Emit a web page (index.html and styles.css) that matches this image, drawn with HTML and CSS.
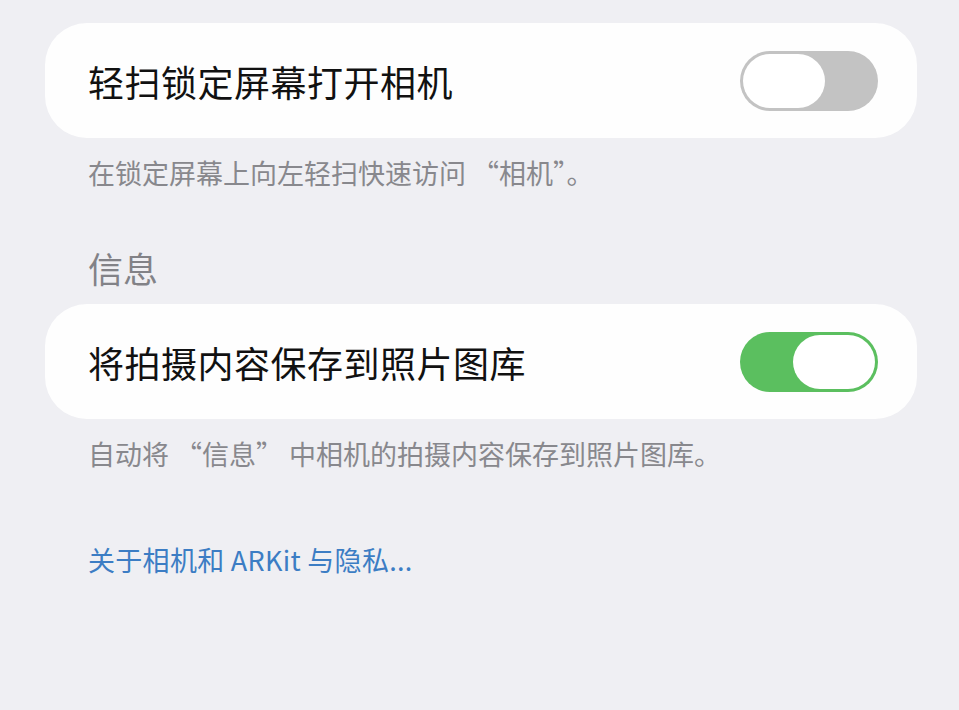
FILE: index.html
```html
<!DOCTYPE html>
<html lang="zh-CN">
<head>
    <meta charset="UTF-8">
    <meta name="viewport" content="width=device-width, initial-scale=1.0">
    <title>相机</title>
    <link rel="stylesheet" href="styles.css">
</head>
<body>
    <div class="settings">
        <div class="cell">
            <span class="cell-label">轻扫锁定屏幕打开相机</span>
            <div class="switch"><div class="knob"></div></div>
        </div>
        <p class="note">在锁定屏幕上向左轻扫快速访问 “相机”。</p>

        <h2 class="group-title">信息</h2>
        <div class="cell">
            <span class="cell-label">将拍摄内容保存到照片图库</span>
            <div class="switch on"><div class="knob"></div></div>
        </div>
        <p class="note">自动将 “信息” 中相机的拍摄内容保存到照片图库。</p>

        <a class="privacy-link" href="#">关于相机和 ARKit 与隐私...</a>
    </div>
</body>
</html>
```

FILE: styles.css
```css
body {
    margin: 0;
    background-color: #efeff3;
    font-family: "Noto Sans CJK SC", "Noto Sans", sans-serif;
    overflow: hidden;
}
.settings {
    padding: 23px 42px 0 45px;
}
.cell {
    display: flex;
    align-items: center;
    justify-content: space-between;
    height: 115px;
    padding: 0 39px 0 43px;
    background-color: #fefefe;
    border-radius: 42px;
}
.cell-label {
    font-size: 36px;
    line-height: 44px;
    letter-spacing: 0.5px;
    color: #111;
}
.switch {
    display: flex;
    width: 138px;
    height: 60px;
    padding: 3px;
    box-sizing: border-box;
    border-radius: 30px;
    background-color: #c3c3c3;
}
.switch .knob {
    width: 82px;
    height: 54px;
    border-radius: 27px;
    background-color: #fff;
}
.switch.on {
    justify-content: flex-end;
    background-color: #5bbf5f;
}
.note {
    margin: 16px 0 0;
    padding-left: 43px;
    font-size: 27px;
    line-height: 38px;
    color: #88888d;
}
.group-title {
    margin: 54px 0 14px;
    padding-left: 43px;
    font-size: 35px;
    line-height: 44px;
    font-weight: normal;
    color: #828287;
}
.privacy-link {
    display: block;
    margin-top: 68px;
    padding-left: 43px;
    font-size: 27px;
    line-height: 38px;
    letter-spacing: 0.3px;
    color: #3c7dc4;
    text-decoration: none;
}
```
